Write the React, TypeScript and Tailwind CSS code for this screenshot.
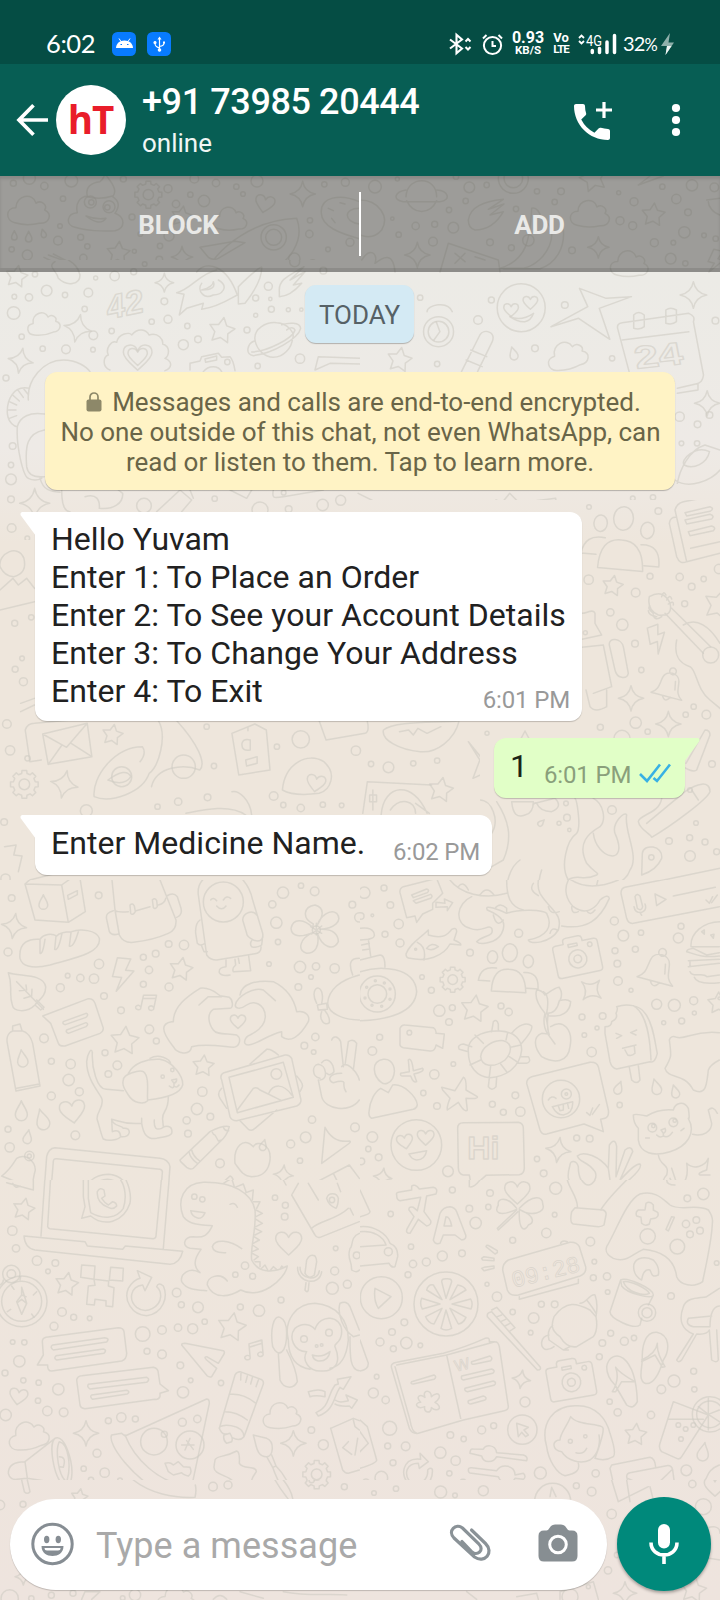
import React from "react";

type Kind = "star" | "spark" | "heart" | "drop" | "cloud" | "gear" | "camera" | "bell" | "bolt" | "note" | "people";
type Motif = [Kind, number, number, number, number?];

function ring(points: number, inner: number) {
  let d = "";
  for (let i = 0; i < points * 2; i++) {
    const a = (i * Math.PI) / points - Math.PI / 2;
    const r = i % 2 ? inner : 1;
    d += `${i ? "L" : "M"}${(Math.cos(a) * r).toFixed(3)} ${(Math.sin(a) * r).toFixed(3)}`;
  }
  return d + "Z";
}

function gearPath() {
  let d = "";
  for (let i = 0; i < 8; i++) {
    const base = (i * Math.PI) / 4;
    [[-0.24, 0.8], [-0.17, 1], [0.17, 1], [0.24, 0.8]].forEach(([o, r], j) => {
      d += `${i || j ? "L" : "M"}${(Math.cos(base + o) * r).toFixed(3)} ${(Math.sin(base + o) * r).toFixed(3)}`;
    });
  }
  return d + "ZM.38 0A.38 .38 0 1 1 -.38 0A.38 .38 0 1 1 .38 0Z";
}

const MOTIFS: Record<Kind, string> = {
  star: ring(5, 0.52),
  spark: "M0 -1Q.16 -.16 1 0Q.16 .16 0 1Q-.16 .16 -1 0Q-.16 -.16 0 -1Z",
  heart: "M0 .9C-.35 .55 -1 .1 -1 -.35C-1 -.95 -.25 -1.05 0 -.45C.25 -1.05 1 -.95 1 -.35C1 .1 .35 .55 0 .9Z",
  drop: "M0 -1C.15 -.5 .6 -.1 .6 .4A.6 .6 0 0 1 -.6 .4C-.6 -.1 -.15 -.5 0 -1Z",
  cloud: "M-.65 .6C-1.1 .5 -1.1 -.1 -.6 -.1C-.6 -.7 .2 -.85 .35 -.32C.6 -.5 .9 -.2 .75 0C1.15 .2 .95 .65 .5 .62C.1 .72 -.3 .7 -.65 .6Z",
  gear: gearPath(),
  camera:
    "M-1 -.5Q-1 -.65 -.85 -.65H-.5V-.75Q-.5 -.9 -.35 -.9H.2Q.35 -.9 .35 -.75V-.65H.85Q1 -.65 1 -.5V.65Q1 .8 .85 .8H-.85Q-1 .8 -1 .65ZM.4 .1A.4 .4 0 1 1 -.4 .1A.4 .4 0 1 1 .4 .1ZM.17 .1A.17 .17 0 1 1 -.17 .1A.17 .17 0 1 1 .17 .1ZM-.3 -.6H.1V-.48H-.3ZM.75 -.42A.1 .1 0 1 1 .55 -.42A.1 .1 0 1 1 .75 -.42Z",
  bell: "M-.95 .7C-.5 .4 -.6 .1 -.5 -.35C-.4 -.85 .4 -.85 .5 -.35C.6 .1 .5 .4 .95 .7ZM-.25 .7Q0 1.15 .25 .7M.2 -.85A.2 .2 0 1 1 -.2 -.85A.2 .2 0 1 1 .2 -.85ZM.3 -.3L.4 .2",
  bolt: "M-.4 -1H.4L.15 -.3H.65L-.3 1L-.05 .15H-.6Z",
  note: "M-.5 .7V-.6L.7 -.85V.5M-.5 -.3L.7 -.55M-.5 .7A.25 .2 0 1 1 -.55 .5M.7 .5A.25 .2 0 1 1 .65 .3",
  people:
    "M-.55 .75Q-.55 -.02 0 0Q.55 -.02 .6 .75ZM.25 -.55A.25 .3 0 1 1 -.25 -.55A.25 .3 0 1 1 .25 -.55ZM-.4 -.38A.17 .21 0 1 1 -.74 -.38A.17 .21 0 1 1 -.4 -.38ZM.8 -.3A.17 .21 0 1 1 .46 -.3A.17 .21 0 1 1 .8 -.3ZM-.62 .42H-1Q-.95 -.08 -.42 -.02M.62 .6H1Q1 .02 .5 .08",
};

interface TileProps {
  x: number;
  y: number;
  w: number;
  h: number;
  sx?: number;
  dots: number[];
  motifs: Motif[];
  lines?: string;
  children?: React.ReactNode;
}

function Tile({ x, y, w, h, sx = 1 / 3, dots, motifs, lines, children }: TileProps) {
  const clip = `tile-${x}-${y}-${w}`;
  const circles: React.ReactNode[] = [];
  for (let i = 0; i < dots.length; i += 3) {
    circles.push(<circle key={i} cx={x + dots[i] * sx} cy={y + dots[i + 1] / 3} r={dots[i + 2] / 3} />);
  }
  return (
    <g clipPath={`url(#${clip})`}>
      <clipPath id={clip}>
        <rect x={x} y={y} width={w} height={h} />
      </clipPath>
      {circles}
      {motifs.map(([kind, mx, my, r, rot = 0], i) => (
        <path key={i} d={MOTIFS[kind]} transform={`translate(${x + mx * sx} ${y + my / 3}) rotate(${rot}) scale(${r / 3})`} />
      ))}
      <g transform={`translate(${x} ${y}) scale(${sx} ${1 / 3})`}>
        {lines && <path d={lines} />}
        {children}
      </g>
    </g>
  );
}

function Wallpaper() {
  return (
    <svg
      className="absolute inset-0 h-[1600px] w-[720px] fill-none stroke-[#cfcbc3]/60 stroke-[1.5] [stroke-linecap:round] [stroke-linejoin:round] [&_*]:[vector-effect:non-scaling-stroke]"
      viewBox="0 0 720 1600"
      aria-hidden="true"
    >
      <Tile
        x={0}
        y={0}
        w={360}
        h={260}
        dots={[40,550,9,88,535,18,133,558,11,189,596,8,214,542,19,370,537,9,504,566,12,583,536,13,571,584,8,612,603,17,648,549,11,709,560,8,729,582,7,771,543,18,973,553,8,1036,547,12,528,612,11,396,651,9,180,678,7,174,722,13,242,712,9,262,739,8,250,774,11,35,748,8,82,765,15,421,702,7,480,738,8,478,779,10,507,708,15,403,754,6,289,800,9,930,661,8,928,702,11,1050,727,12,984,748,7,883,776,17,938,788,9,271,606,18,327,620,18,274,607,8,322,622,8,821,712,38,821,712,24]}
        motifs={[["cloud",86,630,64],["gear",445,584,41],["star",355,760,36,5],["spark",908,582,38],["spark",546,771,32],["drop",43,706,14],["drop",86,710,16],["drop",130,700,13,-15],["heart",794,612,29,12],["cloud",690,655,52],["star",545,650,32,10]]}
        lines="M225 682C195 675 200 640 232 638C225 610 240 590 262 588C255 560 275 548 300 545C315 535 310 520 320 528C345 560 350 575 338 590C360 605 358 620 345 640C375 650 378 685 345 692C310 695 255 692 225 682ZM262 590Q300 600 338 588M258 648Q290 660 318 655Q300 680 258 648M600 742L705 724L735 728L655 775Q640 782 625 772ZM625 805C660 740 760 660 890 655C915 720 870 790 800 816M590 816C610 790 640 800 660 816M1078 605C1020 580 960 590 964 640C965 680 1020 700 1078 716M1078 625C1030 625 1030 665 1078 672M985 625L1000 632M995 655L1005 668M1020 608L1035 612M132 772L190 800M145 765L200 785M160 762L215 790C235 805 240 816 242 830M720 816L790 795L770 816"
      />
      <Tile
        x={360}
        y={0}
        w={360}
        h={280}
        dots={[45,560,19,328,562,16,380,555,8,317,603,8,267,630,8,97,656,5,167,678,11,224,673,9,116,704,8,280,683,16,219,725,13,390,727,10,454,743,9,505,721,17,531,574,8,603,574,10,584,606,8,468,627,8,776,578,6,822,605,12,780,662,12,818,677,12,949,597,14,984,637,10,996,556,17,907,560,8,973,697,17,1032,706,7,1067,716,8,883,728,12,932,776,16,976,790,8,940,728,7,636,751,10,112,537,6,288,530,8,460,535,45,460,535,28,1063,562,13]}
        motifs={[["cloud",690,640,60],["star",880,645,36,5],["spark",172,765,38],["spark",715,742,32],["cloud",808,790,58],["star",700,535,42,-15],["bolt",1066,785,35,15]]}
        lines="M138 590C140 555 165 542 185 542C210 542 230 560 230 590M140 602C160 645 210 645 230 602M138 570C105 575 95 600 130 605H240C275 600 265 572 230 570M325 660C330 620 370 605 430 598L385 628L432 612L390 645L430 635C410 670 380 690 345 690Q325 685 325 660ZM515 625C530 620 540 640 545 655C610 690 560 790 490 805H420C500 780 510 720 515 625ZM430 806H540C590 790 615 740 610 690M240 816L265 730L415 780L420 816M285 760L315 785M315 760L285 790M345 770L375 780M0 600C55 600 90 650 65 690Q40 720 0 705M5 780C30 740 55 760 45 790C70 770 100 755 105 816M835 555L870 528M835 555L910 528M1040 600L1080 595M1045 605C1045 620 1060 640 1080 645"
      />
      <Tile
        x={0}
        y={260}
        w={360}
        h={280}
        dots={[105,43,8,43,110,7,87,112,11,140,92,16,195,105,8,265,98,13,287,54,6,344,48,14,401,35,9,434,12,7,254,147,8,41,159,19,65,230,8,280,226,13,335,213,8,128,266,8,198,268,13,279,269,7,455,185,8,504,178,12,493,124,10,562,198,8,594,238,10,550,254,15,741,210,9,767,166,6,767,114,9,805,79,12,814,148,9,811,117,5,865,149,6,900,296,14,773,318,8,18,354,9,38,558,10,33,615,8,33,658,16,33,718,10,35,804,13,432,737,22,644,716,8,780,750,24,866,747,10,968,735,17,1022,721,15,851,698,7,884,5,15,970,32,10,904,149,5,82,835,7]}
        motifs={[["star",50,50,34,10],["cloud",130,190,50,-10],["spark",233,205,42,12],["spark",493,68,28],["star",665,212,40,10],["spark",62,302,38,10],["spark",104,730,45],["heart",413,292,43],["heart",413,290,29]]}
        lines="M330 330C305 320 310 290 325 285C315 265 335 240 350 247C355 220 390 215 395 225C415 200 440 210 447 225C475 215 490 240 488 252C515 260 505 290 495 295C520 305 515 325 495 332M765 240C760 205 800 185 830 188C865 190 885 220 878 235C875 265 850 292 820 292C795 292 770 270 765 240ZM765 242C740 250 735 285 760 287C820 280 895 235 902 205C900 185 865 188 845 194M755 276C800 275 880 235 885 210C880 198 865 205 860 210M570 330V310L600 303L605 290L655 280L665 292L690 290Q700 300 705 332M610 335C625 315 655 315 665 335M615 297L650 288V300L617 307ZM690 306A8 8 0 1 1 674 306A8 8 0 1 1 690 306M85 420C80 360 130 300 190 300C230 300 260 320 270 335M88 385C40 375 20 420 22 460C25 490 45 500 52 500C60 470 90 455 133 462M72 388L84 403M55 392L70 412M38 405L58 423M28 425L50 435M23 450L48 450M28 475L50 467M52 500C48 560 70 650 85 655Q105 665 125 655M133 510C80 520 75 560 80 620Q85 655 133 650M120 655C130 690 150 695 180 697M185 690C185 740 195 755 210 755M255 710C290 700 300 720 298 745C340 750 370 730 368 700L355 690M470 755L540 690L575 720L545 755M570 690L580 715M690 690L740 715L755 690M820 690C815 715 820 715 850 710L970 690M530 98C570 90 600 40 650 30M530 98L552 103L538 165L560 145L610 130L605 148C660 140 700 110 712 105M605 90Q640 80 640 65Q650 90 605 90M605 70C590 90 610 120 640 105C665 105 690 80 655 60M590 36C620 0 680 15 712 105M715 132V80C745 50 790 10 785 25C785 50 770 85 735 130ZM838 95C835 60 860 50 912 20L870 60L915 35L880 75L905 70Q870 110 838 110ZM945 330L955 290L1080 295M945 330L990 310L1080 312M165 5C140 20 170 30 175 55C200 80 240 75 240 45C235 20 220 10 205 0"
      >
        <text x="318" y="168" transform="rotate(-12 370 130)" className="font-[Liberation_Sans] text-[100px] font-bold italic">42</text>
      </Tile>
      <Tile
        x={0}
        y={280}
        w={720}
        h={220}
        sx={0.4592}
        dots={[915,53,8,1041,120,13,1165,205,10,1333,235,8,1558,122,10,1230,75,10,1070,60,9,952,252,8,1480,410,14,1519,433,10,1518,490,8,1545,405,10,1484,490,7,1378,655,7,1422,652,8,955,155,45,955,155,31,1135,83,72]}
        motifs={[["star",870,240,38,10],["spark",1510,45,40],["drop",1118,220,20,-15],["cloud",1235,225,62,-15],["spark",1540,370,38],["heart",1113,90,22],["heart",1155,68,22]]}
        lines="M1110 110Q1135 125 1162 100Q1150 145 1110 110ZM950 125L958 155L945 180M930 95C930 75 975 60 985 95M1005 275L1045 165C1055 145 1080 155 1072 185L1040 275M1025 210L1060 230M1015 240L1050 260M1200 140L1280 80L1262 25L1320 55L1375 50L1305 85L1328 178L1260 115ZM1345 145Q1343 130 1355 128L1500 100Q1515 108 1510 125L1532 285Q1530 310 1515 312L1475 325M1345 145L1370 275M1380 105V145Q1395 150 1403 140V105Q1390 90 1380 105ZM1450 90V130Q1465 135 1473 125V90Q1460 80 1450 90ZM1355 180L1500 155M1475 610C1480 570 1500 510 1535 495L1568 510M1470 600C1500 630 1550 600 1568 570M1545 515C1515 495 1480 540 1490 555C1510 570 1540 550 1545 515M1475 340L1520 330V310M780 640L860 695M1080 690L1110 640L1150 695L1080 660M1150 665L1210 655L1215 695"
      >
        <text x="1380" y="258" transform="rotate(-8 1440 220)" className="font-[Liberation_Sans] text-[95px] font-bold">24</text>
      </Tile>
      <Tile
        x={480}
        y={500}
        w={240}
        h={380}
        dots={[327,21,7,535,33,10,326,239,14,510,229,9,467,278,13,391,337,11,427,374,17,465,431,10,484,510,8,599,231,11,635,260,10,671,237,8,614,311,9,641,620,8,679,644,13,617,644,8,467,668,17,361,682,9,503,695,8,316,398,6,396,930,13,261,953,10,237,970,6,268,990,5,258,910,7,567,1023,10,629,1013,9,675,1026,9,648,969,7,630,1068,16,710,1055,9,696,792,10,692,465,24,630,870,7,21,700,6,514,1072,8,426,715,24,717,207,14]}
        motifs={[["people",425,120,118,5],["star",398,258,32,10],["bolt",532,418,42,-20],["bell",568,555,50,15],["spark",453,595,38],["spark",565,672,38],["star",718,315,48,15],["drop",184,968,12,45],["star",135,735,42]]}
        lines="M585 30Q590 10 610 5L720 -15M585 30L620 185Q600 195 590 170L568 70Q570 50 590 52M620 185L720 160M615 38L690 20Q705 25 690 34L620 48ZM615 60L690 43Q705 48 695 57L620 72ZM625 95L695 78Q710 83 700 92L630 107ZM632 145L720 125M508 290Q550 265 570 310Q580 350 535 345Q500 330 508 290M555 340L670 460M575 325L692 440M545 290Q550 270 558 285M560 300Q570 280 575 297M565 312Q582 300 580 315M520 340Q500 325 510 318M530 350Q505 345 505 332M545 350Q525 365 520 345M610 375C650 350 690 380 720 430M590 420C580 470 600 490 630 500C650 510 650 570 690 600L720 625M306 340C320 340 340 325 345 340V370L365 405L306 418M306 442L370 435L395 560L340 580M318 570L330 620Q345 640 380 620V570M388 435C385 410 425 415 430 440L445 520C440 540 410 535 405 510ZM618 790L675 690Q690 690 690 705L650 810Q640 820 600 795M545 895C540 940 475 945 475 965C480 990 510 1000 515 1012C570 980 680 900 690 875C690 840 650 850 615 875L500 970M635 870L655 900M95 905H160Q160 940 135 945Q100 960 95 905ZM165 910L225 895Q250 920 215 935Q180 935 170 910M160 915Q165 905 170 910M485 1125L487 1060C490 1030 550 1035 545 1075Q530 1110 485 1125ZM340 895C370 910 380 960 360 980C325 1000 290 1030 320 1090C340 1115 360 1120 350 1125C310 1145 290 1120 265 1140C240 1100 260 1020 290 1000C305 980 290 900 285 895M340 1000C350 1080 450 1100 405 1000C395 970 435 930 440 945C430 990 480 1070 450 1110C430 1170 330 1170 262 1140C250 1180 260 1200 265 1210M0 900C35 900 60 960 35 1000M50 905C85 960 100 1010 70 1080L35 1100M720 1105L430 1165Q420 1170 425 1185L435 1210M185 1110C170 1150 180 1180 185 1200M120 1080C90 1100 75 1150 80 1200"
      />
      <Tile
        x={0}
        y={500}
        w={480}
        h={380}
        sx={0.4592}
        dots={[15,672,13,22,751,14,51,545,12,48,475,7,33,508,9,32,370,9,68,352,8,603,740,8,775,752,14,846,802,16,466,798,8,450,680,8,388,905,11,343,920,8,596,888,13,703,914,8,655,924,11,617,915,8,744,916,7,188,932,18,452,892,10,900,790,8,952,782,8,808,792,8,12,1136,14,9,966,10,615,1178,18,655,1157,8,797,1178,18,60,775,8,655,718,26,265,830,30,400,800,35]}
        motifs={[["star",245,705,32,10],["gear",53,853,42],["spark",140,853,42,12],["star",960,870,38,10],["star",850,1185,25],["heart",688,850,28,10]]}
        lines="M93 702L190 670L200 770L105 793ZM93 702L145 742L190 670M105 793L135 735M200 770L155 730M90 780L65 785L55 690Q60 670 75 670L155 660M345 662C365 710 345 800 325 820C310 880 240 910 205 890C200 830 250 740 310 740Q320 760 305 785M385 662C430 730 450 790 435 810C400 790 340 800 330 860M235 840Q275 800 285 830Q270 860 235 840M505 700L555 672L580 690L588 810L520 825ZM535 780L560 770V790L537 798ZM527 730Q530 715 545 720V750Q525 755 527 730M540 680V692M615 870C620 790 670 755 705 785C735 820 720 870 695 880Q640 890 615 870M695 662L710 720L795 700Q805 695 800 665M835 690C860 660 960 670 1000 662C990 720 950 760 915 755C870 750 830 720 835 690ZM870 695L890 690L900 705L910 685L930 700L960 680M790 940L800 845L940 855M830 945C835 850 900 840 930 940M812 870V930M805 885H820V905H805ZM850 930C870 890 905 900 905 940M905 910L935 940M1020 725L1070 810L1030 835L1045 780ZM405 940C440 930 500 910 535 945M505 875C520 870 545 900 548 945M0 200C-5 160 40 130 52 175Q60 220 30 230Q10 230 0 200M0 270L28 235L40 255L58 235L75 265M75 305L0 330M45 610L75 595M45 635L75 615M65 1140L150 1110L195 1120M10 1040L35 1035L30 1065L48 1068L40 1115"
      />
      <Tile
        x={0}
        y={880}
        w={360}
        h={300}
        dots={[35,54,10,296,46,10,24,216,12,297,252,14,203,287,7,241,294,11,282,296,14,181,323,12,312,348,10,430,232,9,467,221,10,506,192,10,552,195,14,447,270,11,430,313,9,507,321,12,363,391,10,849,38,17,903,17,8,944,34,13,817,73,11,829,128,17,834,186,8,807,252,7,900,261,17,948,259,11,1004,265,14,933,291,7,895,321,10,1057,74,10,946,471,11,913,497,10,941,516,7,132,475,13,154,544,9,212,552,14,206,600,17,238,635,12,154,648,12,315,518,9,352,556,13,325,582,10,448,448,13,469,483,9,607,635,14,591,687,17,631,710,10,560,721,11,564,761,10,24,748,9,29,802,14,226,766,13,660,850,13,936,719,11,917,772,16,872,792,12,900,842,8,1065,742,13,949,150,12,670,66,60,88,828,14,88,828,6,488,590,5,517,570,5,829,582,16,1078,112,14]}
        motifs={[["spark",42,138,38,8],["star",543,268,36,10],["star",374,483,44,5],["star",610,558,33,5],["bolt",368,285,50,5],["note",442,368,32,12],["heart",218,695,38,-8],["heart",714,425,23],["drop",130,66,22],["drop",67,535,26,-8],["drop",64,692,30],["drop",127,718,32,-15],["drop",83,770,21,10],["spark",850,885,30,5],["drop",790,795,17,15]]}
        lines="M75 12L185 15L205 127L105 120ZM185 15L220 -10L240 -5L256 95L205 127M75 12L105 -15H210M203 46L232 32V44L205 58ZM60 235C55 185 90 175 120 178C130 162 155 158 170 168C180 155 200 155 215 155C240 145 290 150 298 175C305 220 220 235 150 255C90 270 65 255 60 235ZM120 178V220Q128 225 135 178M168 168L164 208Q175 215 186 160M213 158L208 198Q220 205 235 155M335 -10L345 90L358 165Q370 190 400 187Q460 180 505 160Q530 150 528 120L480 0M345 92Q355 98 385 95M408 92L450 80M475 75Q495 70 497 55M390 75Q398 68 403 78L406 95Q398 108 392 100ZM457 60Q465 52 470 62L472 80Q465 90 460 82ZM340 92Q315 98 320 118L328 155Q335 168 355 162M500 48Q520 35 532 50L543 85Q548 105 530 112M595 45C590 5 620 -20 660 -25M720 -10Q750 20 758 60L788 160C792 185 775 185 760 180Q740 170 740 160L728 120C730 95 760 90 770 105M595 45L620 225Q630 240 650 240L760 222Q785 220 783 200M632 60Q640 50 650 62M670 60Q680 45 692 55M650 78Q665 95 678 78M600 120Q585 130 587 160L592 190Q600 200 615 190M605 198L612 215H622M755 182Q748 192 755 200Q770 205 785 195L787 178M678 240V260Q655 262 658 278Q665 290 690 285M705 238L707 255Q695 265 700 275L752 272L746 228M715 235L718 250M940 132C905 115 910 80 945 75C980 85 965 115 952 135C960 110 990 85 1010 100C1030 125 1000 145 960 148C1000 145 1015 165 1015 185C1000 215 965 200 952 160C960 200 945 220 920 220C890 210 900 175 938 158C910 170 875 175 873 145C880 110 915 120 938 142ZM949 130V165M932 140L965 160M965 138L935 162M25 278C60 290 130 280 137 320C138 350 115 360 105 375C80 400 40 395 37 375C25 340 40 320 25 278ZM50 305L130 388M58 332L80 330L78 315M72 355L95 348L96 328M105 375L122 390L132 382L110 360M128 408L265 356Q280 355 285 370L310 445Q310 455 300 460L195 498Q180 500 175 490L152 430ZM190 425L258 400Q268 402 258 412L196 434Q186 432 190 425ZM200 450L258 428Q268 432 258 440L205 460Q196 456 200 450ZM38 450V438L60 432L66 452M38 453C20 460 20 480 22 490L48 633L120 618L98 490C90 460 75 455 66 452ZM50 625L118 612M515 425L520 425C520 380 560 350 600 325C630 320 650 340 660 347L688 352C700 360 700 385 690 385L640 388C620 400 625 430 640 450C650 465 680 460 710 465C725 475 720 500 700 502C670 500 620 490 575 500C570 530 530 520 520 500C480 450 485 430 515 425ZM597 375L625 350L665 350M720 345C725 310 770 300 820 305C870 330 885 370 890 395C920 390 930 410 925 425C900 470 870 490 845 470V455C800 465 780 490 745 495C725 495 735 470 750 465C780 450 795 430 796 410C795 370 760 360 740 375C720 390 705 385 706 375C710 350 760 320 790 330L826 362M260 545C262 520 275 500 277 518C275 560 290 630 320 628L370 632M260 545C260 600 300 640 305 655C315 680 285 700 292 720C300 745 305 770 310 777C325 785 355 780 362 770C395 775 395 740 370 745C365 735 340 740 335 718C350 720 370 735 425 730C430 760 440 780 470 775C490 770 510 770 515 760C520 735 495 735 485 745Q460 755 463 720M335 718L337 755Q360 745 362 770M425 715V730M505 650C505 700 485 690 488 720L490 740M385 580C400 550 440 535 480 538C520 545 550 590 548 615C540 645 490 655 443 660M370 600C370 580 420 570 430 575C450 590 440 640 443 662C430 675 400 670 385 645C375 630 365 615 370 600ZM450 535C475 520 510 535 512 552M515 600L530 597Q530 608 522 610ZM522 610V618M508 618Q520 628 522 618Q530 625 537 615M665 600Q658 585 672 578L855 525Q868 523 875 535L903 660Q903 672 890 678L710 722Q695 722 690 710ZM687 592L850 547L880 652L712 698ZM712 690L760 625Q770 620 780 630L845 662M805 642C820 610 850 610 875 645M750 552L800 508Q812 505 835 525M665 625Q650 640 660 655L680 685M720 722L745 748Q755 755 765 745L830 690M890 588Q910 610 907 620Q903 630 900 635M540 840L630 755Q670 735 688 740Q680 770 660 785L580 865Q570 870 560 862L542 845ZM637 757Q640 765 645 765L655 783L665 780M670 742Q675 755 686 752M567 815Q570 835 592 850M575 810Q580 830 598 842M760 800C770 780 815 790 810 840C805 880 780 890 755 890C730 890 720 870 705 850C700 800 730 770 760 800ZM1025 560C1035 540 1070 570 1078 600M995 480C1000 465 1015 470 1022 485L1030 560M1060 570L1070 490Q1060 475 1045 485L1035 555M960 595C935 590 935 555 955 553C980 555 985 600 960 600M965 548C980 530 1000 545 1002 575Q990 590 980 580M955 600L965 650C975 690 1050 700 1078 660M1025 580C980 580 985 605 1000 608Q1030 600 1032 608Q1030 625 1038 635M975 742Q1000 790 1048 783Q1055 785 1045 792L965 850ZM5 888C30 870 40 850 50 835C75 820 105 840 106 870Q95 910 100 928Q60 910 5 888M38 910Q48 930 62 918M130 965L140 830Q145 805 165 803L480 835Q505 838 510 860L502 965M150 965L160 845Q160 835 170 836L480 868Q488 870 487 878L480 965M252 965C250 910 280 885 325 883C370 885 395 925 392 965M265 965C265 920 290 900 322 898C360 900 378 930 378 965M545 965C545 930 580 900 640 907C690 910 730 930 755 958M668 908L690 888Q700 890 702 915M702 920L730 910Q738 920 738 937M875 945L1048 855L1078 895M875 945L885 965M1000 880L1025 930M1078 285C1020 300 985 330 983 370C985 400 1030 420 1078 420M950 370C930 330 955 310 965 335Q970 350 965 370M952 375L980 370L982 388L955 390ZM965 395C955 420 975 440 988 428Q990 410 975 392M1058 285C1045 250 1050 235 1078 235"
      />
      <Tile
        x={360}
        y={880}
        w={360}
        h={300}
        dots={[13,38,17,72,24,9,91,75,10,37,106,4,2,108,10,116,132,14,75,163,9,120,189,12,330,218,10,186,291,7,214,331,9,238,392,17,277,383,9,267,426,10,59,472,9,37,513,13,423,378,9,446,396,11,476,160,12,763,123,12,790,167,16,843,158,8,955,174,15,963,139,9,765,212,9,826,208,9,772,251,10,774,303,13,813,331,6,666,411,9,728,408,10,711,444,6,673,465,7,695,516,14,890,373,15,943,376,18,1001,362,12,1003,399,6,965,423,9,911,428,6,280,552,7,223,583,14,190,639,8,231,678,10,466,646,10,397,673,9,430,697,9,481,695,14,37,771,16,25,807,8,56,832,10,4,844,10,264,874,16,531,837,8,551,880,10,650,774,9,689,776,10,779,675,8,148,458,7,169,795,76,603,657,56,619,642,15,619,642,4,877,743,13,940,727,13,880,738,5,944,722,5,167,208,3,52,342,54,52,342,28,46,302,3,73,309,3,90,327,3,90,358,3,65,379,3,36,376,3,15,354,3,20,322,3,1078,355,4]}
        motifs={[["gear",278,299,38],["people",447,268,90,3],["camera",652,230,68,-12],["bell",895,265,58,15],["spark",694,330,38,40],["star",343,387,42,8],["spark",68,892,28,8],["spark",595,810,38,8],["drop",776,623,20,20],["drop",888,620,24,-15],["drop",945,634,20,-15],["heart",135,785,24,-10],["heart",197,773,25],["star",1076,370,34]]}
        lines="M120 38Q118 25 130 20L230 -5L248 40L218 70V88L188 102L170 127L165 108L140 113ZM155 45L200 27Q210 30 202 38L160 53ZM160 62L212 43Q220 48 212 55L168 70ZM228 67L255 70L253 57L278 68L262 92V80L228 82ZM138 222C150 190 180 175 205 150V165C240 175 260 170 275 148Q290 140 290 155L282 180Q305 190 302 195L270 192C250 230 200 245 150 235Q138 235 138 222ZM172 187Q200 200 192 240M200 205Q215 185 235 200Q215 215 200 205M0 145Q30 140 40 155Q48 170 35 175L25 178L32 228M0 180L28 178M5 195L28 190M8 210L30 207M0 240L60 225Q75 225 75 262M0 275C60 255 165 260 170 335C165 400 80 420 0 422M120 445Q125 433 135 435L220 443Q230 450 228 460L253 462L248 505L228 495Q225 515 210 513L130 503Q118 500 120 490ZM325 515C320 480 360 450 420 453C465 455 485 480 485 510C480 560 440 590 390 593C350 590 325 560 325 515ZM362 530C365 500 400 480 430 482C460 490 455 520 435 540C400 565 365 560 362 530ZM370 490L345 465M395 455L400 425Q410 415 415 432V453M438 480L443 457M452 502L482 495M448 530L475 548M422 552L440 575M392 558L388 590M362 540L330 555M325 515L298 508Q290 495 310 492L335 500M455 460C475 435 500 425 515 438Q520 450 485 490M480 530L505 530Q515 545 500 550H470M388 593L385 620Q395 635 408 620L410 592M550 335Q570 345 560 400M555 400Q565 440 565 460M555 400C530 370 525 345 530 330Q545 330 555 345C570 335 590 320 598 322Q610 340 600 362Q620 355 632 365C630 400 600 410 580 408Q560 410 560 400M555 400C550 420 550 440 562 460L585 492M565 400C560 430 560 445 568 465M572 440C610 415 640 450 630 500C625 550 580 550 545 530C520 500 520 470 545 460L565 462M598 362Q590 400 562 400M245 622L285 632L310 592Q320 595 318 630L352 650Q355 658 318 655L322 690Q315 700 295 667L262 690Q260 680 270 655L248 630ZM122 580L148 575L145 540Q155 530 160 572L188 565Q195 575 162 582L170 605Q160 610 152 588L128 588Q120 588 122 580ZM70 538C100 535 110 570 98 595C90 610 75 615 65 608C40 590 30 545 70 538ZM27 695C30 660 45 635 62 625L85 638L98 615C130 610 170 650 172 675Q170 685 160 688L35 715Q25 710 27 695ZM500 610Q500 595 515 590L690 547Q710 545 715 560L745 690Q748 710 735 715L722 718L730 755L672 732L560 762Q545 765 540 750ZM565 660Q575 645 588 655M577 680L638 665Q640 700 610 705Q590 705 577 680ZM595 678L600 692L610 690V672M622 668L626 685M680 698L690 706L698 684M697 703L718 674M147 822L200 812Q195 840 170 840Q155 838 147 822ZM293 745Q293 728 310 728L475 727Q490 730 490 745L493 865Q492 882 478 884L378 886L335 925L328 885H310Q296 882 295 865ZM770 380C800 370 840 375 855 400C880 430 885 490 892 520Q885 550 870 545L770 567Q755 565 750 545L735 460V440Q755 440 755 425Q775 415 768 400Q775 385 770 380ZM820 377C860 400 870 470 873 540M768 460L785 467L770 475M830 450L812 458L828 465M788 505L828 495M795 510L803 525Q815 530 825 520L823 500M808 562L815 600Q830 615 840 600L835 557M928 480Q932 465 950 472C980 480 1000 450 1078 458M928 480C935 530 935 530 915 565C925 600 970 575 1000 630C1040 650 1040 610 1045 570Q1050 555 1078 540M820 705Q825 700 860 708C890 690 920 688 940 690C945 670 970 660 985 685Q990 720 985 715C1010 760 980 800 930 815C880 830 840 820 835 780V745Q820 730 820 705ZM903 750L915 745Q920 755 910 760ZM910 760V768M890 765Q900 775 910 768Q925 775 937 757M857 774H868M963 752L972 745M998 763C1030 770 1055 755 1055 730L1045 690Q1060 675 1072 700M895 825C900 860 930 850 920 885C905 900 905 920 940 915L930 895M935 865L950 910C980 920 985 880 980 850C1000 870 1035 860 1045 835L1040 870Q1010 880 1020 885L1050 885M270 0C300 40 370 60 440 40M295 20Q310 0 325 30M360 45Q380 15 402 45M440 0C440 50 450 80 490 90M335 50C290 70 280 130 330 145C370 160 385 130 395 145C405 170 370 165 350 185C360 195 410 190 425 160C440 130 430 110 382 90C370 70 420 90 440 100C480 85 550 90 560 100C580 140 560 170 505 180C510 195 570 190 595 150C610 100 570 90 540 40C530 20 535 0 537 -10M405 85Q420 65 440 85V98M400 105Q410 145 430 120M520 10Q505 30 535 47M565 80Q570 105 598 95M570 160Q575 140 592 150M625 0C610 30 620 60 640 80C680 110 710 80 720 60Q745 40 748 55C720 120 680 150 605 138M635 80Q635 105 655 95M680 92Q690 110 705 90M620 -10Q680 40 775 0M710 15L715 -5M783 40Q783 25 795 22L930 -5M783 40L800 115Q805 132 820 130L1078 80M825 50Q830 38 840 48L848 80Q845 95 832 85ZM822 80Q825 100 845 97Q862 90 855 72M840 97L845 106M885 42L918 58L890 77ZM940 48L1066 22M1038 60L1048 70L1058 50M1055 68L1072 45M993 200C990 160 1030 125 1080 125M993 200H1078M980 215Q980 208 1000 205L1040 225L1078 218M980 215C1000 220 1020 235 1078 228M985 242L1078 238M985 260L1078 250M990 245V260M990 275C995 295 1030 275 1040 290L1078 285M1003 292Q1010 315 1078 308M1025 155L1033 150V163ZM1052 165L1062 163L1060 175ZM652 828C670 810 720 830 745 865L750 900M652 828C660 850 680 840 705 875C715 895 695 915 685 917C660 910 655 880 655 860C650 840 630 840 630 855C620 890 625 900 630 905M745 865L748 795Q765 770 770 800L768 890M768 890L795 810Q815 795 818 815L780 900M780 900C800 880 825 850 840 852Q850 865 795 910"
      >
        <text x="322" y="836" className="font-[Liberation_Sans] text-[96px] font-bold">Hi</text>
      </Tile>
      <Tile
        x={0}
        y={1180}
        w={360}
        h={300}
        dots={[37,152,14,48,205,11,111,242,14,166,249,10,144,274,7,186,396,13,221,412,9,269,415,7,162,439,12,428,462,22,486,450,13,534,443,11,578,446,15,614,425,8,594,382,16,544,374,9,530,338,13,721,381,9,777,392,17,486,523,13,441,514,9,541,556,10,572,601,7,549,637,17,663,609,8,38,486,7,73,487,8,58,544,17,15,579,9,70,601,8,116,608,8,175,628,17,114,662,8,142,693,14,191,697,13,17,705,17,325,722,9,364,712,14,406,717,9,547,727,12,592,717,11,291,820,12,251,866,8,273,900,8,360,901,7,314,878,14,639,920,14,825,53,8,856,76,9,854,110,10,1007,205,7,1004,273,12,997,325,18,1042,313,12,843,360,9,934,750,10,970,794,15,1033,920,8,735,257,11,706,284,8,758,289,9,583,50,8,607,58,8,34,282,13,34,282,26,65,364,76,65,364,60,462,785,40,570,795,42,493,763,9,912,477,10,987,458,10,950,498,4,965,495,4,996,60,8,1070,226,10]}
        motifs={[["star",71,88,34,12],["star",200,313,36,10],["star",695,442,44,10],["note",765,510,33,-5],["heart",866,190,39],["cloud",845,705,58,-5],["cloud",85,765,62,-12],["heart",55,650,27,10],["spark",258,760,38],["spark",880,790,38],["gear",950,883,42],["star",238,958,28,10]]}
        lines="M135 -10L123 168M508 -10L490 205M152 -10L143 140Q145 145 150 146L460 176Q468 175 468 168L485 -10M72 168L255 185L262 198L368 208L376 198L548 214Q540 250 510 253L105 210Q75 205 72 168ZM250 0V50L255 80L245 115L272 108C310 140 370 130 390 70C395 40 385 15 378 0M265 0V55L272 98C310 120 350 115 370 85C380 55 376 20 362 0M292 35Q300 20 312 30L315 48L305 55Q315 70 325 75L338 65Q350 68 350 78Q340 90 325 82C305 75 290 60 292 35ZM20 8L100 30V0M38 10Q45 28 60 18M65 322V345L50 365L65 403L80 370L65 322ZM52 368L65 358L80 370M65 345L78 350M35 318L42 328M110 335L100 345M95 402L102 412M22 395L32 388M10 300Q10 310 0 315M60 300L62 290M245 255L285 258L282 298L242 292ZM332 262L370 265L368 303L328 300ZM282 298L326 303L325 318L342 323L338 380L318 378V362L285 358L283 375L260 373L265 318L285 316ZM412 272L455 292L435 332L428 315C390 320 385 360 410 382C440 405 480 380 482 350C483 330 475 325 470 320Q475 305 490 318C505 350 490 400 440 407C395 405 370 360 385 325Q400 300 420 295ZM550 110C530 60 550 10 610 7C700 5 755 40 765 90C770 150 750 200 755 240C775 280 820 280 862 258C855 300 780 360 722 330C690 350 640 360 622 315C620 290 660 275 682 303M550 110C570 135 600 135 637 137C625 165 610 175 580 170C550 170 545 200 570 205L603 208C580 240 580 260 600 278C570 260 540 280 545 305C560 330 590 330 620 332M572 92L615 98Q608 115 595 115Q575 110 572 92ZM690 73Q705 65 712 82M725 206C690 180 645 175 637 200Q640 220 677 218M670 10L695 -5L703 20M705 22L730 12L738 35M738 38L760 30L757 60M760 65L780 65L770 85M768 90L787 100L768 110M768 118L787 130L768 140M765 145L785 155L765 165M762 170L778 180L760 190M757 195L775 207L757 215M757 220L775 230L762 240M765 245L780 245L780 260M785 265L795 255L803 270M810 272L820 260L832 270M840 268L845 258L850 262M127 485Q127 475 138 472L355 443Q370 443 372 455L380 520Q380 538 365 543L155 573Q142 573 143 555L112 555L130 525ZM158 495L315 473Q330 475 320 486L160 510Q148 502 158 495ZM168 527L310 507Q322 510 312 520L170 540Q160 535 168 527ZM230 600Q232 588 245 587L460 562Q475 565 475 580L480 612L505 632L480 640V650Q475 660 465 658L255 686Q242 685 240 675ZM265 613L440 592Q452 598 440 607L270 627Q260 620 265 613ZM275 645L380 631Q392 635 382 642L278 658Q268 650 275 645ZM545 495Q545 490 555 490L670 512Q675 515 672 522L655 550L620 530Q610 530 620 540L650 565L635 590Q628 592 622 588ZM705 585Q710 575 720 575L780 597Q792 600 790 612L732 770M705 585L658 745M723 580L722 600M742 588L737 607M758 590L752 612M775 600L768 620M692 643Q730 640 765 668M675 695Q710 695 742 720M658 745C655 730 730 730 732 770Q720 785 697 773M658 745Q665 765 680 762M672 765L690 760Q700 775 695 785L680 790Q668 780 672 765ZM335 765L365 760L375 768L620 657Q628 657 628 670L575 920L580 922Q590 930 588 958M335 765C320 790 400 900 500 945L520 958M375 765C400 830 470 910 575 920M545 795H582M570 775L555 810M560 782L580 808M495 850Q510 845 520 855L535 845L550 860L570 862Q578 880 565 888Q550 885 545 878L520 885L505 875ZM645 840C650 825 670 835 710 813Q720 815 718 850C730 870 770 855 769 875C760 890 755 890 752 915C730 940 705 930 700 905C685 885 640 885 642 860ZM760 765L800 775C825 785 820 830 800 830C770 830 770 800 760 765ZM800 830L818 862L828 858L815 825M818 862C830 900 850 930 865 958M828 858C860 890 875 930 878 955M75 845L165 775M75 845Q25 845 25 880Q30 900 50 898L82 895L75 845ZM82 895L195 912M165 775C195 760 220 850 215 890Q210 925 190 915C160 890 145 790 165 775ZM178 785C205 790 215 860 200 905C175 890 165 810 178 785M178 830Q200 830 190 862L180 860M65 898L73 935Q82 945 90 935L82 900M865 480C850 420 890 370 945 370C1010 375 1045 420 1045 480C1040 530 1020 560 990 565M865 480C865 530 885 560 930 568M945 448C960 400 1025 405 1025 455C1025 490 1000 490 1005 500C1030 560 990 575 965 573C925 575 905 540 920 515C880 515 865 470 885 445C910 425 935 435 945 448ZM937 525Q965 535 990 515Q985 545 955 543Q940 540 937 525ZM840 412C820 405 810 450 818 500C835 535 860 520 860 460Q860 420 840 412ZM835 520L840 600C850 625 880 630 892 605C890 570 870 530 860 510M1020 370Q1040 360 1050 380L1078 450M1020 370C1010 400 1030 450 1060 470L1078 465M1050 470C1050 530 1050 570 1078 572M925 635Q960 625 975 635V650Q945 645 930 650ZM948 698C990 680 980 650 1005 615L1015 612L1012 598L1053 590L1030 628L1020 622C1000 650 1005 690 955 708ZM1005 660C1020 670 1030 665 1045 662L1038 645L1072 660L1055 685L1048 678Q1020 680 1005 672M992 745L1060 715L1078 722M992 745L1028 870Q1035 880 1045 880L1078 870M1045 785L1028 803L1055 823M1073 775L1065 825M1060 720L1065 740L1078 750M895 10L875 45L945 165Q950 175 960 172L1078 125M925 10L955 60M1012 10L1022 35M1050 85L1060 105M935 145C960 120 1010 120 1045 85M980 55A18 18 0 0 1 1015 55Q1015 75 1008 85Q985 75 980 55M1078 160C1050 170 1060 200 1050 205C1040 240 1055 235 1055 270Q1070 280 1078 270M920 240Q930 220 945 228Q950 235 950 245L943 285Q925 300 915 280ZM893 262C890 310 960 320 965 275M900 262C900 300 955 305 958 272M918 308L915 330Q922 340 925 330L927 308M850 0L858 15"
      />
      <Tile
        x={360}
        y={1180}
        w={360}
        h={300}
        dots={[277,30,9,390,39,10,328,86,10,385,81,8,92,102,8,347,129,17,587,25,18,559,159,14,584,104,7,458,181,9,153,200,8,159,252,11,199,246,12,247,228,15,306,220,10,144,284,9,691,185,13,703,245,7,700,293,9,741,289,11,743,336,7,933,348,10,381,313,6,411,350,14,544,373,9,584,373,10,458,396,8,521,414,16,512,458,7,752,460,9,727,489,10,793,484,12,822,474,8,133,427,10,96,456,10,60,486,12,139,489,17,100,506,9,181,496,7,50,590,7,40,639,15,77,660,11,495,666,15,718,530,9,749,665,8,773,697,11,942,603,18,904,628,13,1001,574,9,1003,628,8,873,705,11,89,745,21,83,798,9,137,799,13,271,765,10,311,777,8,365,750,12,401,737,9,241,818,17,99,848,9,287,842,14,64,893,19,18,906,9,108,926,8,42,939,7,268,880,8,309,907,9,242,936,18,371,931,15,285,946,7,541,879,18,707,880,11,649,917,9,695,935,13,979,871,16,997,912,11,982,55,10,1030,42,17,1070,249,7,64,353,63,258,372,96,978,132,11,1009,120,10,1020,152,10,990,163,10,863,169,23,952,200,22,487,749,44,861,398,26,861,398,15,676,769,5,631,784,6,955,735,7,977,747,7,1000,735,7,963,777,7,1050,703,53,1050,703,40,85,215,12]}
        motifs={[["spark",484,598,28,8],["star",827,764,34,5],["camera",633,600,70,-10],["drop",1030,815,28,10],["heart",472,38,38]]}
        lines="M110 45Q108 38 115 37L155 30V18Q165 10 178 27L220 22Q235 25 228 42L200 48L192 95L212 122Q215 135 200 138L175 118L150 160Q135 160 142 145L162 110L147 90Q145 78 160 82L172 92L182 52L120 62Q110 60 110 45ZM220 180L240 100Q250 80 270 80Q285 82 290 95L317 165Q320 178 305 180L285 165H250L240 190Q225 195 220 180ZM252 138L258 110Q270 110 275 138ZM470 85C440 45 410 55 415 75C400 100 420 110 470 88M478 85C520 40 550 50 548 72C560 100 510 110 478 88C530 110 520 130 505 135C495 155 475 155 478 90M470 90L412 145L415 150L474 95M378 200Q380 193 388 198L412 212V218L405 222ZM365 235L372 230L402 235V242L368 240ZM365 265L372 262L402 258V265L372 272ZM428 270Q428 250 445 240L630 187Q650 185 658 200L677 260Q680 280 660 288L475 345Q450 350 442 330ZM478 350V358L655 310V298M602 190Q605 180 622 185M45 325L93 350L55 385Q40 360 45 325ZM258 355L245 305Q245 295 260 296Q275 295 275 305ZM258 390L243 445Q258 455 275 445ZM240 372L185 355Q178 372 187 387ZM276 372L332 357Q340 372 333 387ZM246 359L200 330Q205 312 220 315ZM270 359L293 315Q312 318 318 330ZM246 385L197 410Q205 430 222 432ZM270 385L318 412Q310 430 295 432ZM95 565Q90 550 110 547L250 520Q320 500 375 475Q390 470 388 485L405 485Q415 485 418 500L445 680Q445 690 430 693L310 720L175 760Q155 762 148 745ZM105 560L150 720Q155 755 170 760M110 555L260 525L302 715M260 525L405 485M195 652C185 628 215 628 214 650C235 630 250 650 225 667C250 680 235 700 214 683C215 702 190 700 194 680C170 690 160 668 182 667C165 650 180 640 195 652ZM155 605L222 585Q232 590 222 598L160 612Q150 612 155 605ZM335 545L390 528Q400 535 392 542L342 553Q332 553 335 545ZM305 588L395 567Q408 572 398 580L310 600Q302 598 305 588ZM315 625L400 603Q412 608 402 616L322 635Q312 632 315 625ZM325 662L370 648Q383 652 375 660L332 672Q322 672 325 662ZM382 408Q380 398 395 395L540 560Q545 570 532 570L382 410M395 390L410 382L465 443L450 453M412 410L425 405M422 425L437 418M435 438L450 430M582 410C620 360 650 370 690 390L708 410Q715 450 700 470L650 500Q620 505 600 470C570 450 575 430 582 410ZM660 370C680 370 690 340 705 345Q715 370 708 410M682 362Q700 385 708 400M578 437Q560 450 567 480L610 510H625M567 465C540 470 540 500 555 508Q570 510 582 500M630 500L610 510M740 200C770 150 800 60 840 42C890 30 910 60 930 75C960 95 1010 70 1045 90Q1060 110 1057 130C1055 190 1030 290 1028 305C1000 325 960 315 950 290C945 250 920 215 850 208C820 220 800 250 760 235C740 225 735 215 740 200ZM855 90L858 70Q870 62 880 75V90L893 97Q898 110 885 115L872 117L868 132Q855 140 845 130L843 112L830 108Q825 95 835 90ZM918 148L935 110L943 112L925 153ZM635 95L645 83L730 90Q740 95 738 105L732 135Q725 140 715 140L640 132Q628 128 635 95ZM622 0C630 30 655 55 652 83M722 90C740 60 770 30 800 0M665 0Q685 30 705 0M822 270C815 235 850 225 880 240Q900 260 895 285C875 295 875 280 870 270Q850 265 845 300Q825 290 822 270ZM782 300L750 395C750 415 820 450 840 435L845 415M878 350L865 375M782 300C800 290 880 325 880 345C880 360 800 340 785 318ZM790 305C810 300 860 325 868 340C850 350 800 335 790 305ZM970 380C980 350 1020 355 1040 350L1078 325M970 380C955 420 965 450 1000 462L950 540Q955 550 965 540L1010 462Q1040 465 1048 450L1055 540Q1070 550 1075 540L1070 450M1048 440H1000Q975 435 985 415L1055 408M1050 440C1050 400 1060 380 1078 378M740 560C745 530 770 520 790 535C815 555 830 600 832 665Q820 690 800 675L765 615C750 600 740 580 740 560ZM767 562Q780 580 825 605M767 562Q780 600 757 635L767 635L785 605L825 605M847 540C845 500 855 455 890 457C930 465 930 510 910 540C895 590 875 615 855 610C835 600 845 570 847 540ZM892 490Q888 520 845 540M892 490Q890 520 915 560L907 562L885 525L845 545M560 800C540 730 580 675 650 677C710 675 740 720 750 760Q770 820 760 830Q735 845 705 835Q740 740 725 740C705 730 650 735 632 710C620 740 600 760 600 780C575 780 575 810 605 815C620 840 660 855 690 840C720 820 720 780 717 765M560 800C565 840 590 880 615 887C650 880 660 870 655 850M648 818Q670 825 680 805M750 865L755 855L870 832Q885 835 887 862M750 865L770 955M800 890Q800 880 810 878L920 857Q935 855 938 870L948 945M800 890L815 955M803 895L870 925Q880 925 935 870M870 930L825 955M908 910L948 935M1035 900C1045 890 1040 870 1078 855M1035 900Q1035 930 1078 935M940 665L1045 705L965 830Q960 840 950 835L905 815Q895 805 900 790ZM925 718H1030M1045 703V655M1045 703L1078 690M1045 703L1078 725M1045 703V750M1045 703L1015 680M330 820Q330 805 340 807L370 808C375 795 405 790 410 818L490 825Q505 830 500 842L410 830C400 850 370 850 365 828ZM325 870Q325 862 335 863L410 872C425 850 465 855 465 885L490 880Q500 890 490 898L465 895C455 915 425 915 415 890L335 880Q325 880 325 870ZM180 820L205 845L178 865L175 850C140 850 130 880 150 905C180 920 205 900 203 870Q210 860 217 868C220 900 200 925 165 920C130 910 120 870 145 845Q160 835 182 838ZM470 730L505 742L492 750L505 765L497 770L485 757L475 770ZM525 958C530 930 560 915 580 915C610 918 630 940 632 958M570 950L575 922L588 950M0 140C40 135 80 160 90 190Q115 200 113 230L105 260Q95 265 87 250L0 258M0 155C40 150 70 170 78 195M0 200L78 195M0 30L30 95Q30 102 0 110M0 480L25 550Q25 570 0 573M0 720L22 740L50 840Q50 850 0 865M0 755L25 790L0 815M328 0V20Q340 25 360 0M920 0Q920 15 945 15"
      >
        <text x="450" y="300" strokeWidth="0.8" transform="rotate(-14 550 270)" className="font-[Liberation_Mono] text-[70px]">09:28</text>
        <text x="285" y="572" strokeWidth="0.8" transform="rotate(-14 300 560)" className="font-[Liberation_Sans] text-[48px]">W</text>
      </Tile>
      <Tile
        x={0}
        y={1480}
        w={360}
        h={120}
        dots={[0,75,14,69,73,9,639,20,13,935,0,8,1033,20,9,29,355,26,94,355,8,154,346,9,219,340,9,405,345,17,368,354,7,684,15,12]}
        motifs={[["star",238,52,26,10],["spark",70,290,25],["cloud",530,355,58],["gear",950,-15,42]]}
        lines="M65 0L73 35Q82 45 90 35L82 0M400 0C450 40 520 55 585 52Q590 30 586 15M825 0C845 35 860 50 865 58M850 0C870 25 875 40 878 55M245 358L255 335L300 335L275 358M640 358Q660 335 680 358M720 335L790 355M850 335C930 350 980 340 1040 345"
      />
      <Tile
        x={360}
        y={1480}
        w={360}
        h={120}
        dots={[755,102,14,1030,80,24,744,271,11,771,225,8,370,32,15,242,36,18,108,26,8,42,39,7,285,46,7,649,17,9,695,35,13,997,12,11,578,64,54,685,320,6,630,350,24]}
        motifs={[["spark",795,340,35],["star",1000,330,40,10],["heart",1065,20,32]]}
        lines="M755 0L775 65L865 20M800 0L810 65M870 20L880 60M1020 155C1060 130 1080 140 1080 160M1020 230L1080 240M570 50L575 22L588 50M600 358V335L700 305L715 358M320 335L350 358M470 350L530 340L535 358"
      />
    </svg>
  );
}

function StatusBar() {
  return (
    <div className="flex h-16 items-center bg-[#054d44] pt-[23px] pl-[46px] text-white">
      <span className="w-[66px] font-[Lato] text-[25.5px] leading-none tracking-[-0.4px]">6:02</span>
      <svg className="mr-[11px] size-6" viewBox="0 0 24 24">
        <rect width="24" height="24" rx="5.5" fill="#087bff" />
        <path d="M4 16C4.2 11.5 7.5 8.5 12.5 8.5S20.8 11.5 21 16Z" fill="#fff" />
        <path d="M7 6.5L9 9.5M18 6.5L16 9.5" stroke="#fff" />
        <path d="M8.5 12.5h1.5M15 12.5h1.5" stroke="#087bff" />
      </svg>
      <svg className="size-6" viewBox="0 0 24 24" fill="none" stroke="#fff" strokeWidth="1.2">
        <rect width="24" height="24" rx="5.5" fill="#087bff" stroke="none" />
        <path d="M12.5 6V18M12.5 16C9 15 8 14 8 11M12.5 14.5C16 14 17 13 17 11" />
        <path d="M12.5 4.5l2 3h-4z" fill="#fff" stroke="none" />
        <circle cx="12.5" cy="18" r="1.2" fill="#fff" />
        <circle cx="8" cy="10.5" r="1" fill="#fff" />
        <path d="M16 9.5h2v2h-2z" fill="#fff" stroke="none" />
      </svg>
      <svg className="ml-[277px] h-6 w-6" viewBox="0 0 24 24" fill="none" stroke="#fff" strokeWidth="2.1">
        <path d="M2 7.500L14 16.500L8.500 21.300V2.700L14 7.500L2 16.500" />
        <path d="M17.500 9.500L20 7L22.500 9.500M17.500 15L20 17.500L22.500 15" strokeWidth="2" />
      </svg>
      <svg className="ml-[9px] h-6 w-[22px]" viewBox="0 0 22 24" fill="none" stroke="#fff" strokeWidth="2">
        <circle cx="11.5" cy="13.5" r="8.600" />
        <path d="M11.500 9v5h3.500M2 6.500L5.500 3M21 6.500L17.500 3" />
      </svg>
      <div className="ml-[8px] flex w-[34px] flex-col items-center font-[Roboto] font-bold">
        <span className="text-[16px] leading-[13px]">0.93</span>
        <span className="text-[11.5px] leading-[12px]">KB/S</span>
      </div>
      <div className="ml-[8px] flex w-4 flex-col items-center font-[Roboto] font-bold">
        <span className="text-[13px] leading-[12px]">Vo</span>
        <span className="text-[11.5px] leading-[11px] tracking-[-1px]">LTE</span>
      </div>
      <svg className="ml-[9px] h-6 w-[40px] overflow-visible" viewBox="0 0 40 24" fill="none" stroke="#fff">
        <path d="M1 6L3.500 3.500L6 6M1 9L3.500 11.500L6 9" strokeWidth="1.800" />
        <path d="M14.300 18.500V20.500M21.500 16.500V20.500M29 10V20.500M36.500 3.500V20.500" strokeWidth="3.500" strokeLinecap="round" />
        <text x="8" y="13.500" fill="#fff" stroke="none" className="font-[Roboto] text-[14.5px]" textLength="16" lengthAdjust="spacingAndGlyphs">4G</text>
      </svg>
      <span className="ml-[5px] w-[36px] font-[Lato] text-[20px] leading-none tracking-[-0.8px] whitespace-nowrap">
        32<span className="text-[16.5px]">%</span>
      </span>
      <svg className="ml-[2px] h-6 w-[14px]" viewBox="0 0 14 24">
        <path d="M9 1L0 14H6L4.500 23L13 10.500H7.500Z" fill="#8fb0ab" />
        <path d="M1.500 14H10.600L4.500 23L6 14Z" fill="#eef4f3" />
      </svg>
    </div>
  );
}

function Header() {
  return (
    <header className="flex h-28 items-center bg-[#075e54] text-white">
      <svg className="ml-4 h-9 w-8" viewBox="0 0 32 36" fill="none" stroke="#fff" strokeWidth="3.700">
        <path d="M32 18H4M17.500 3.300L3 18L17.500 32.700" />
      </svg>
      <div className="ml-2 flex size-[70px] items-center justify-center rounded-full bg-white">
        <span className="pr-px pb-[2px] font-[Open_Sans] text-[38.5px] leading-none font-bold tracking-[-1px] text-[#e91d2a]">hT</span>
      </div>
      <div className="ml-4 flex w-[426px] flex-col whitespace-nowrap">
        <span className="font-[Roboto] text-[36px] leading-[42px] font-medium tracking-[-0.4px]">+91 73985 20444</span>
        <span className="mt-[3px] font-[Roboto] text-[26px] leading-[34px] text-[#f0f6f5]">online</span>
      </div>
      <svg className="h-12 w-12 overflow-visible" viewBox="0 0 48 48">
        <path
          transform="translate(0 2) scale(2)"
          fill="#fff"
          d="M20 15.500c-1.250 0-2.450-.2-3.570-.57a1.020 1.020 0 0 0-1.020.24l-2.200 2.200a15.045 15.045 0 0 1-6.590-6.590l2.200-2.210a.96.96 0 0 0 .25-1A11.360 11.360 0 0 1 8.500 4c0-.55-.45-1-1-1H4c-.55 0-1 .45-1 1 0 9.390 7.610 17 17 17 .55 0 1-.45 1-1v-3.500c0-.55-.45-1-1-1z"
        />
        <path d="M36 6V22M28 14H44" stroke="#fff" strokeWidth="3.200" />
      </svg>
      <svg className="ml-[54px] h-10 w-3" viewBox="0 0 12 40" fill="#fff">
        <circle cx="6" cy="8" r="4.100" />
        <circle cx="6" cy="20" r="4.100" />
        <circle cx="6" cy="32" r="4.100" />
      </svg>
    </header>
  );
}

function Tail({ side }: { side: "left" | "right" }) {
  return side === "left" ? (
    <svg className="absolute top-0 -left-[15px] h-[26px] w-[16px]" viewBox="0 0 16 26">
      <path d="M16 0H2Q0 .3 .5 3L16 24Z" fill="#fff" />
    </svg>
  ) : (
    <svg className="absolute top-0 -right-[15px] h-[26px] w-[16px]" viewBox="0 0 16 26">
      <path d="M0 0H14Q16 .3 15.500 3L0 24Z" fill="#e1ffc7" />
    </svg>
  );
}

const LINES = [
  "Hello Yuvam",
  "Enter 1: To Place an Order",
  "Enter 2: To See your Account Details",
  "Enter 3: To Change Your Address",
  "Enter 4: To Exit",
];

function Conversation() {
  return (
    <main className="relative flex grow flex-col font-[Roboto] whitespace-nowrap">
      <div className="mt-[13px] mr-px flex h-[58px] w-[109px] items-center justify-center self-center rounded-[11px] bg-[#d4eaf4] text-[26px] text-[#566166] shadow-[0_1px_1px_rgba(0,0,0,0.25)]">
        <span className="pt-[3px]">TODAY</span>
      </div>
      <div className="mt-[29px] ml-[45px] flex h-[118px] w-[630px] flex-col items-center rounded-[12px] bg-[#fff3c5] pt-[15px] text-[26px] leading-[30px] text-[#696548] shadow-[0_1px_1px_rgba(0,0,0,0.25)]">
        <span className="flex items-center pl-[7px] tracking-[-0.02px]">
          <svg className="mr-[10px] h-5 w-[16px]" viewBox="0 0 16 20">
            <rect x=".5" y="7.500" width="15" height="12" rx="2" fill="#8d8869" />
            <path d="M4 8V5A4 4 0 0 1 12 5V8" fill="none" stroke="#8d8869" strokeWidth="1.700" />
          </svg>
          Messages and calls are end-to-end encrypted.
        </span>
        <span className="pl-px tracking-[-0.02px]">No one outside of this chat, not even WhatsApp, can</span>
        <span>read or listen to them. Tap to learn more.</span>
      </div>

      <div className="relative mt-[22px] ml-[35px] flex h-[209px] w-[547px] justify-between rounded-[12px] rounded-tl-none bg-white pt-2 pl-4 shadow-[0_1px_1px_rgba(0,0,0,0.2)]">
        <Tail side="left" />
        <div className="flex w-[430px] flex-col text-[32px] leading-[38px] tracking-[0.035px] text-[#212121]">
          {LINES.map((line) => (
            <span key={line}>{line}</span>
          ))}
        </div>
        <span className="mr-3 mb-[7px] self-end text-[24px] leading-[28px] tracking-[-0.15px] text-[#999]">6:01 PM</span>
      </div>

      <div className="relative mt-[17px] mr-[35px] flex h-[60px] w-[191px] self-end rounded-[12px] rounded-tr-none bg-[#e1ffc7] pl-4 shadow-[0_1px_1px_rgba(0,0,0,0.2)]">
        <Tail side="right" />
        <span className="w-[34px] pt-[9px] text-[32px] leading-[38px] text-[#1c2416]">1</span>
        <span className="w-[95px] pt-[23px] text-[24px] leading-[28px] tracking-[-0.15px] text-[#8a9f7b]">6:01 PM</span>
        <svg className="mt-[25px] h-5 w-8" viewBox="0 0 32 20" fill="none" stroke="#38b1e4" strokeWidth="2.600">
          <path d="M1 11L8 18L21 1.500M14.500 15L18 18L31 1.500" />
        </svg>
      </div>

      <div className="relative mt-[17px] ml-[35px] flex h-[60px] w-[457px] justify-between rounded-[12px] rounded-tl-none bg-white pl-4 shadow-[0_1px_1px_rgba(0,0,0,0.2)]">
        <Tail side="left" />
        <span className="pt-[9px] text-[32px] leading-[38px] tracking-[0.035px] text-[#212121]">Enter Medicine Name.</span>
        <span className="mr-3 pt-[23px] text-[24px] leading-[28px] tracking-[-0.2px] text-[#999]">6:02 PM</span>
      </div>
    </main>
  );
}

function Composer() {
  return (
    <footer className="relative mb-[9px] flex items-center pl-[10px]">
      <div className="flex h-[91px] w-[597px] items-center rounded-full bg-white shadow-[0_1px_1px_rgba(0,0,0,0.2)]">
        <svg className="ml-5 size-11" viewBox="0 0 44 44" fill="none" stroke="#868d93">
          <circle cx="22.500" cy="22" r="19.700" strokeWidth="3" />
          <ellipse cx="16.700" cy="17.500" rx="2.700" ry="3.700" fill="#868d93" stroke="none" />
          <ellipse cx="28.300" cy="17.500" rx="2.700" ry="3.700" fill="#868d93" stroke="none" />
          <path d="M11.500 24H33.500C33.500 31 28 34 22.500 34S11.500 31 11.500 24Z" fill="#868d93" stroke="none" />
          <path d="M14.500 26H30.500Q30.500 28.500 28 28.500H17Q14.500 28.500 14.500 26Z" fill="#fff" stroke="none" />
        </svg>
        <span className="ml-[22px] w-[353px] pt-[3px] font-[Roboto] text-[36px] leading-none tracking-[0.05px] whitespace-nowrap text-[#a9a9a9]">Type a message</span>
        <svg className="h-11 w-11" viewBox="0 0 44 44" fill="none" stroke="#8a9297" strokeWidth="3.200" strokeLinecap="round">
          <path d="M23 7L37 20.500C46 29.500 36 41 26 34L5.500 15C-1.500 7.500 7.500 0 14 5L30 20.500C37 28 28 33 23.500 29L13.500 18.500" transform="translate(-.5 1)" />
        </svg>
        <svg className="mb-[3px] ml-[45px] h-[38px] w-10" viewBox="0 0 40 38">
          <path d="M6 6.500H8.500Q10 6.500 11.500 4L13 2Q14.500 .5 17 .5H23Q25.500 .5 27 2L28.500 4Q30 6.500 31.500 6.500H34Q39.500 6.500 39.500 12V32Q39.500 37.500 34 37.500H6Q.5 37.500 .5 32V12Q.5 6.500 6 6.500Z" fill="#878e92" />
          <circle cx="20" cy="20.500" r="8.300" fill="none" stroke="#fff" strokeWidth="3" />
        </svg>
      </div>
      <div className="ml-[10px] flex size-[94px] items-center justify-center rounded-full bg-[#00897b] shadow-[0_2px_3px_rgba(0,0,0,0.3)]">
        <svg className="h-11 w-8" viewBox="0 0 32 44" fill="none" stroke="#fff" strokeWidth="3.600">
          <rect x="10" y="2" width="12" height="24.500" rx="6" fill="#fff" stroke="none" />
          <path d="M3 20.500C3 37 29 37 29 20.500M16 33V42" />
        </svg>
      </div>
    </footer>
  );
}

export default function App() {
  return (
    <div className="relative flex h-[1600px] w-[720px] flex-col overflow-hidden bg-[linear-gradient(180deg,#ecebe6_0%,#ecebe6_17%,#eeeae6_28%,#eee6dc_34%,#eee6dc_72%,#eee4de_100%)]">
      <Wallpaper />
      <div className="relative">
        <StatusBar />
        <Header />
        <div className="flex h-24 items-center border-b-4 border-black/10 bg-[#4e4d4b]/50 pt-1 font-[Roboto] text-[26px] font-bold text-[#e9e9e7] shadow-[inset_0_3px_3px_rgba(0,0,0,0.12)]">
          <span className="w-[359px] pt-[2px] pr-[2px] text-center tracking-[-0.2px]">BLOCK</span>
          <div className="h-16 w-[2px] bg-white" />
          <span className="w-[359px] pt-[2px] pr-[2px] text-center tracking-[-0.2px]">ADD</span>
        </div>
      </div>
      <Conversation />
      <Composer />
    </div>
  );
}
